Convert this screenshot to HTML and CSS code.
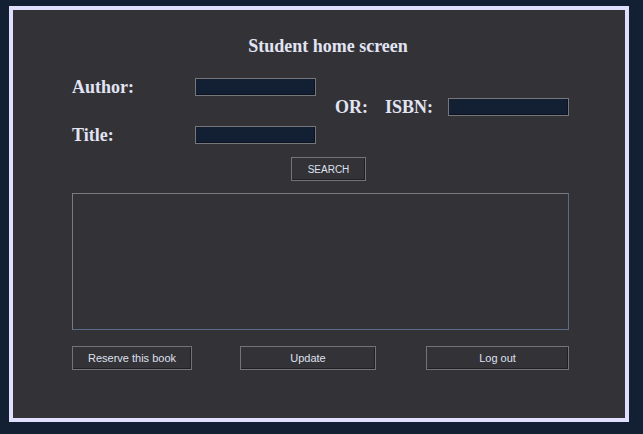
FILE: index.html
```html
<!DOCTYPE html>
<html>
<head>
<meta charset="utf-8">
<title>Student home screen</title>
<link rel="stylesheet" href="styles.css">
</head>
<body>
<div class="frame">
  <h1 class="title">Student home screen</h1>
  <div class="search">
    <div class="fields">
      <div class="field"><label class="lbl">Author:</label><input class="box" type="text"></div>
      <div class="field"><label class="lbl">Title:</label><input class="box" type="text"></div>
    </div>
    <div class="isbn">
      <span class="lbl or">OR:</span>
      <span class="lbl isbn-lbl">ISBN:</span>
      <input class="box" type="text">
    </div>
  </div>
  <div class="search-row"><button class="btn search-btn">SEARCH</button></div>
  <div class="list"></div>
  <div class="actions">
    <button class="btn reserve">Reserve this book</button>
    <button class="btn update">Update</button>
    <button class="btn logout">Log out</button>
  </div>
</div>
</body>
</html>
```
FILE: styles.css
```css
html, body {
  margin: 0;
  padding: 0;
  background: #131f33;
  width: 643px;
  height: 434px;
  overflow: hidden;
}
body {
  padding: 6px 0 0 9px;
  box-sizing: border-box;
}
.frame {
  box-sizing: border-box;
  width: 620px;
  height: 416px;
  border: 4px solid #e0e0fe;
  background: #333236;
  padding: 26px 56px 0 59px;
  display: flex;
  flex-direction: column;
}
.title {
  margin: 0;
  padding-left: 15px;
  text-align: center;
  font-family: "Liberation Serif", "Times New Roman", serif;
  font-weight: bold;
  font-size: 18px;
  line-height: 20px;
  height: 20px;
  color: #e2e4f4;
}
.lbl {
  font-family: "Liberation Serif", "Times New Roman", serif;
  font-weight: bold;
  font-size: 18px;
  line-height: 18px;
  color: #e2e4f4;
}
.search {
  display: flex;
  align-items: center;
  margin-top: 22px;
}
.fields {
  display: flex;
  flex-direction: column;
  gap: 30px;
}
.field {
  display: flex;
  align-items: center;
}
.field .lbl {
  width: 123px;
  margin-top: -1px;
}
.box {
  box-sizing: border-box;
  width: 121px;
  height: 18px;
  margin: 0;
  padding: 0;
  background: #131f33;
  border: 1px solid #76767b;
  box-shadow: inset -1px -1px 0 #0c1320;
  outline: none;
}
.isbn {
  display: flex;
  align-items: center;
  margin-left: 19px;
  margin-bottom: 8px;
}
.or {
  margin-right: 17px;
}
.isbn-lbl {
  margin-right: 15px;
}
.btn {
  box-sizing: border-box;
  margin: 0;
  padding: 0;
  height: 24px;
  background: #333236;
  border: 1px solid #737378;
  box-shadow: inset -1px -1px 0 #1f1f22;
  font-family: "Liberation Sans", Arial, sans-serif;
  font-size: 11px;
  color: #dfe0f0;
}
.search-row {
  display: flex;
  margin-top: 13px;
}
.search-btn {
  width: 75px;
  margin-left: 219px;
  font-size: 10px;
}
.list {
  box-sizing: border-box;
  margin-top: 12px;
  height: 137px;
  border: 1px solid;
  border-color: #7a7a80 #5b6a86 #5b6a86 #7a7a80;
  background: #333236;
}
.actions {
  display: flex;
  margin-top: 16px;
}
.reserve { width: 120px; }
.update { width: 136px; margin-left: 48px; }
.logout { width: 143px; margin-left: auto; }
```
